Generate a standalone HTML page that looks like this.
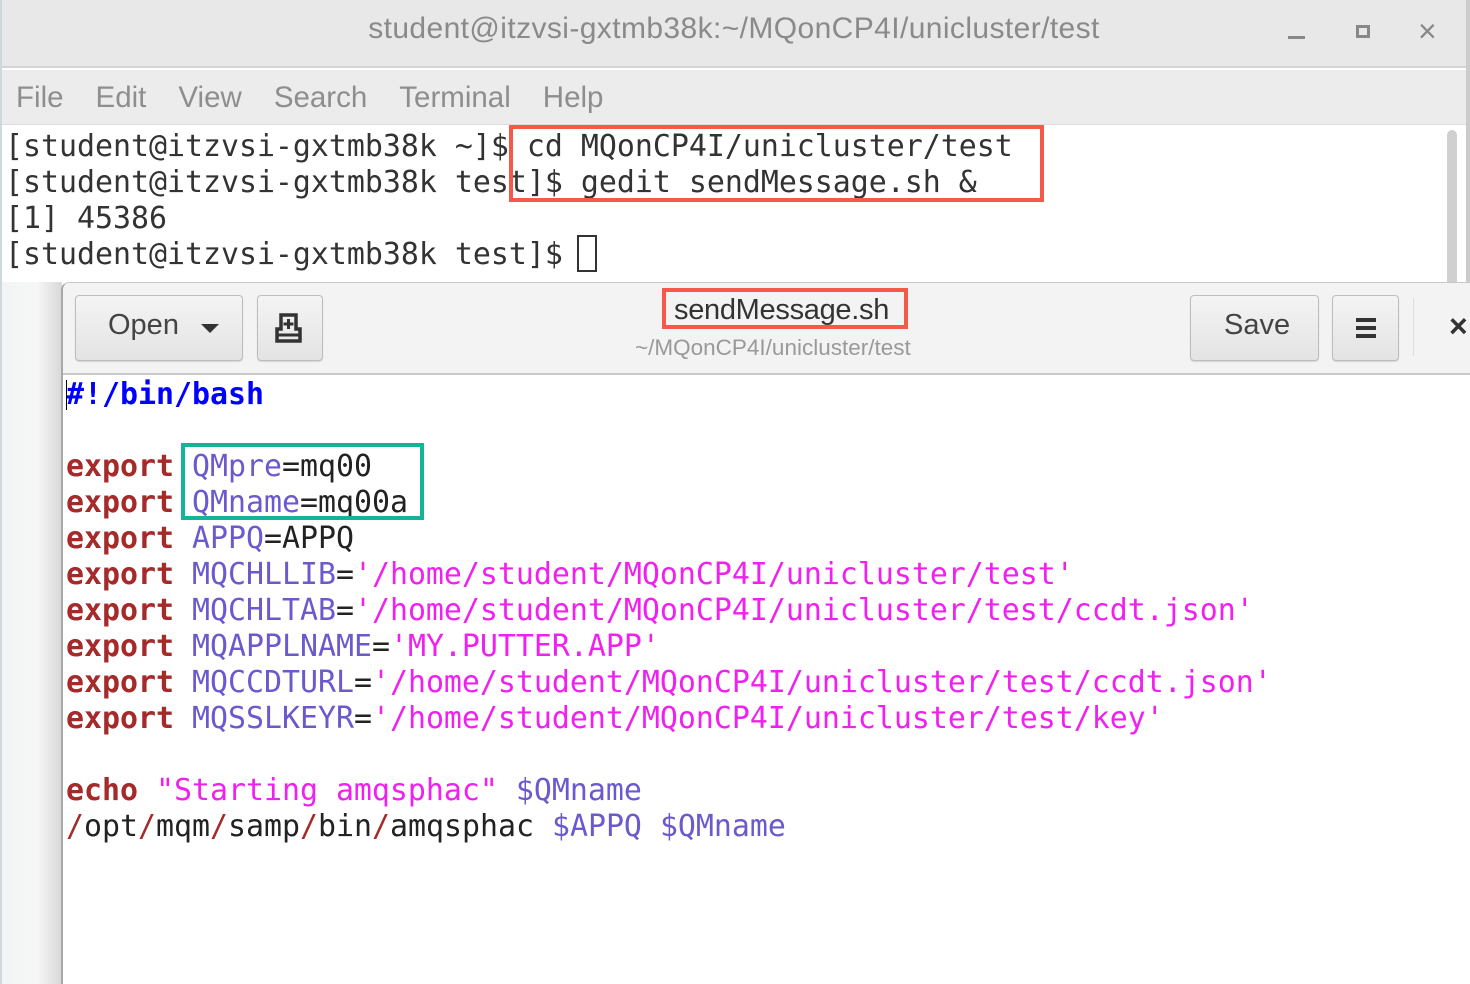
<!DOCTYPE html>
<html><head><meta charset="utf-8"><style>
*{margin:0;padding:0;box-sizing:border-box}
body{width:1470px;height:984px;overflow:hidden;background:#fff;position:relative;font-family:"Liberation Sans",sans-serif}
.abs{position:absolute}
.mono{font-family:"DejaVu Sans Mono","Liberation Mono",monospace;font-size:29.9px;white-space:pre;line-height:36px}
.t{color:#333}
.kw{color:#a52a2a;font-weight:bold}
.v{color:#6a5acd}
.s{color:#f020f0}
.sl{color:#a52a2a}
.btn{position:absolute;border:1px solid #bdbdbd;border-radius:4px;background:linear-gradient(#f4f4f4,#e3e3e3);box-shadow:0 1px 1px rgba(0,0,0,.12);color:#444}
</style></head><body>
<div class="abs" style="left:0;top:0;width:1470px;height:68px;background:#e8e8e8;border-bottom:2px solid #d4d4d4"></div>
<div class="abs" style="left:0;top:12px;width:1468px;text-align:center;font-size:30px;color:#8a8a8a;letter-spacing:0.4px">student@itzvsi-gxtmb38k:~/MQonCP4I/unicluster/test</div>
<div class="abs" style="left:1288px;top:36px;width:17px;height:3px;background:#888"></div>
<div class="abs" style="left:1356px;top:25px;width:14px;height:13px;border:3px solid #888"></div>
<div class="abs" style="left:1418px;top:13px;font-size:32px;color:#888">×</div>
<div class="abs" style="left:0;top:70px;width:1470px;height:55px;background:#ececec;border-bottom:1px solid #ddd"></div>
<div class="abs" style="left:16px;top:81px;font-size:29.5px;color:#8e8e8e">
<span style="margin-right:32px">File</span><span style="margin-right:32px">Edit</span><span style="margin-right:32px">View</span><span style="margin-right:32px">Search</span><span style="margin-right:32px">Terminal</span><span>Help</span></div>
<div class="abs" style="left:1447px;top:130px;width:10px;height:160px;background:#d0d0d0;border-radius:5px"></div>
<div class="abs" style="left:1466px;top:0;width:4px;height:300px;background:#ccc"></div>
<div class="abs mono t" style="left:5px;top:129px">[student@itzvsi-gxtmb38k ~]$ cd MQonCP4I/unicluster/test
[student@itzvsi-gxtmb38k test]$ gedit sendMessage.sh &amp;
[1] 45386
[student@itzvsi-gxtmb38k test]$ </div>
<div class="abs" style="left:577px;top:235px;width:20px;height:37px;border:2px solid #333"></div>
<div class="abs" style="left:509px;top:125px;width:535px;height:77px;border:4px solid #f4594a"></div>
<div class="abs" style="left:0;top:282px;width:62px;height:702px;background:linear-gradient(90deg,#f2f4f5 0,#f6f6f6 60%,#d8d8d8 100%)"></div>
<div class="abs" style="left:0;top:0;width:2px;height:984px;background:#cfd8dc"></div>
<div class="abs" style="left:61px;top:282px;width:1409px;height:702px;background:#fff;border-left:2px solid #a8a8a8;border-top:1px solid #c8c8c8;border-top-left-radius:8px"></div>
<div class="abs" style="left:63px;top:283px;width:1407px;height:92px;background:#f3f3f3;border-bottom:2px solid #c9c9c9;border-top-left-radius:7px"></div>
<div class="btn" style="left:75px;top:295px;width:168px;height:66px"></div>
<div class="abs" style="left:108px;top:309px;font-size:29px;color:#444">Open</div>
<div class="abs" style="left:201px;top:324px;width:0;height:0;border-left:9px solid transparent;border-right:9px solid transparent;border-top:9px solid #333"></div>
<div class="btn" style="left:257px;top:295px;width:66px;height:66px"></div>
<svg class="abs" style="left:272px;top:311px" width="36" height="36" viewBox="0 0 36 36"><path d="M9 4h15v14h4v12H5V18h4z" fill="none" stroke="#333" stroke-width="3.5"/><path d="M16.5 8v10M11.5 13h10" stroke="#333" stroke-width="3"/><path d="M5 24h23" stroke="#333" stroke-width="3"/></svg>
<div class="abs" style="left:674px;top:294px;font-size:29px;color:#333;letter-spacing:-0.3px">sendMessage.sh</div>
<div class="abs" style="left:635px;top:335px;font-size:22.5px;color:#999">~/MQonCP4I/unicluster/test</div>
<div class="abs" style="left:662px;top:288px;width:246px;height:41px;border:4px solid #f4594a"></div>
<div class="btn" style="left:1190px;top:295px;width:129px;height:66px"></div>
<div class="abs" style="left:1224px;top:309px;font-size:29px;color:#444">Save</div>
<div class="btn" style="left:1332px;top:295px;width:67px;height:66px"></div>
<div class="abs" style="left:1356px;top:318px;width:20px;height:4px;background:#333;box-shadow:0 8px 0 #333,0 16px 0 #333"></div>
<div class="abs" style="left:1413px;top:298px;width:1px;height:58px;background:#ddd"></div>
<div class="abs" style="left:1449px;top:308px;font-size:32px;font-weight:bold;color:#333">×</div>
<div class="abs mono" style="left:66px;top:377px;color:#222"><span style="color:#0000ff;font-weight:bold">#!/bin/bash</span>

<span class="kw">export</span> <span class="v">QMpre</span>=mq00
<span class="kw">export</span> <span class="v">QMname</span>=mq00a
<span class="kw">export</span> <span class="v">APPQ</span>=APPQ
<span class="kw">export</span> <span class="v">MQCHLLIB</span>=<span class="s">'/home/student/MQonCP4I/unicluster/test'</span>
<span class="kw">export</span> <span class="v">MQCHLTAB</span>=<span class="s">'/home/student/MQonCP4I/unicluster/test/ccdt.json'</span>
<span class="kw">export</span> <span class="v">MQAPPLNAME</span>=<span class="s">'MY.PUTTER.APP'</span>
<span class="kw">export</span> <span class="v">MQCCDTURL</span>=<span class="s">'/home/student/MQonCP4I/unicluster/test/ccdt.json'</span>
<span class="kw">export</span> <span class="v">MQSSLKEYR</span>=<span class="s">'/home/student/MQonCP4I/unicluster/test/key'</span>

<span class="kw">echo</span> <span class="s">"Starting amqsphac"</span> <span class="v">$QMname</span>
<span class="sl">/</span>opt<span class="sl">/</span>mqm<span class="sl">/</span>samp<span class="sl">/</span>bin<span class="sl">/</span>amqsphac <span class="v">$APPQ</span> <span class="v">$QMname</span></div>
<div class="abs" style="left:66px;top:380px;width:1px;height:30px;background:#000"></div>
<div class="abs" style="left:181px;top:443px;width:243px;height:77px;border:4px solid #14b39a"></div>
</body></html>
